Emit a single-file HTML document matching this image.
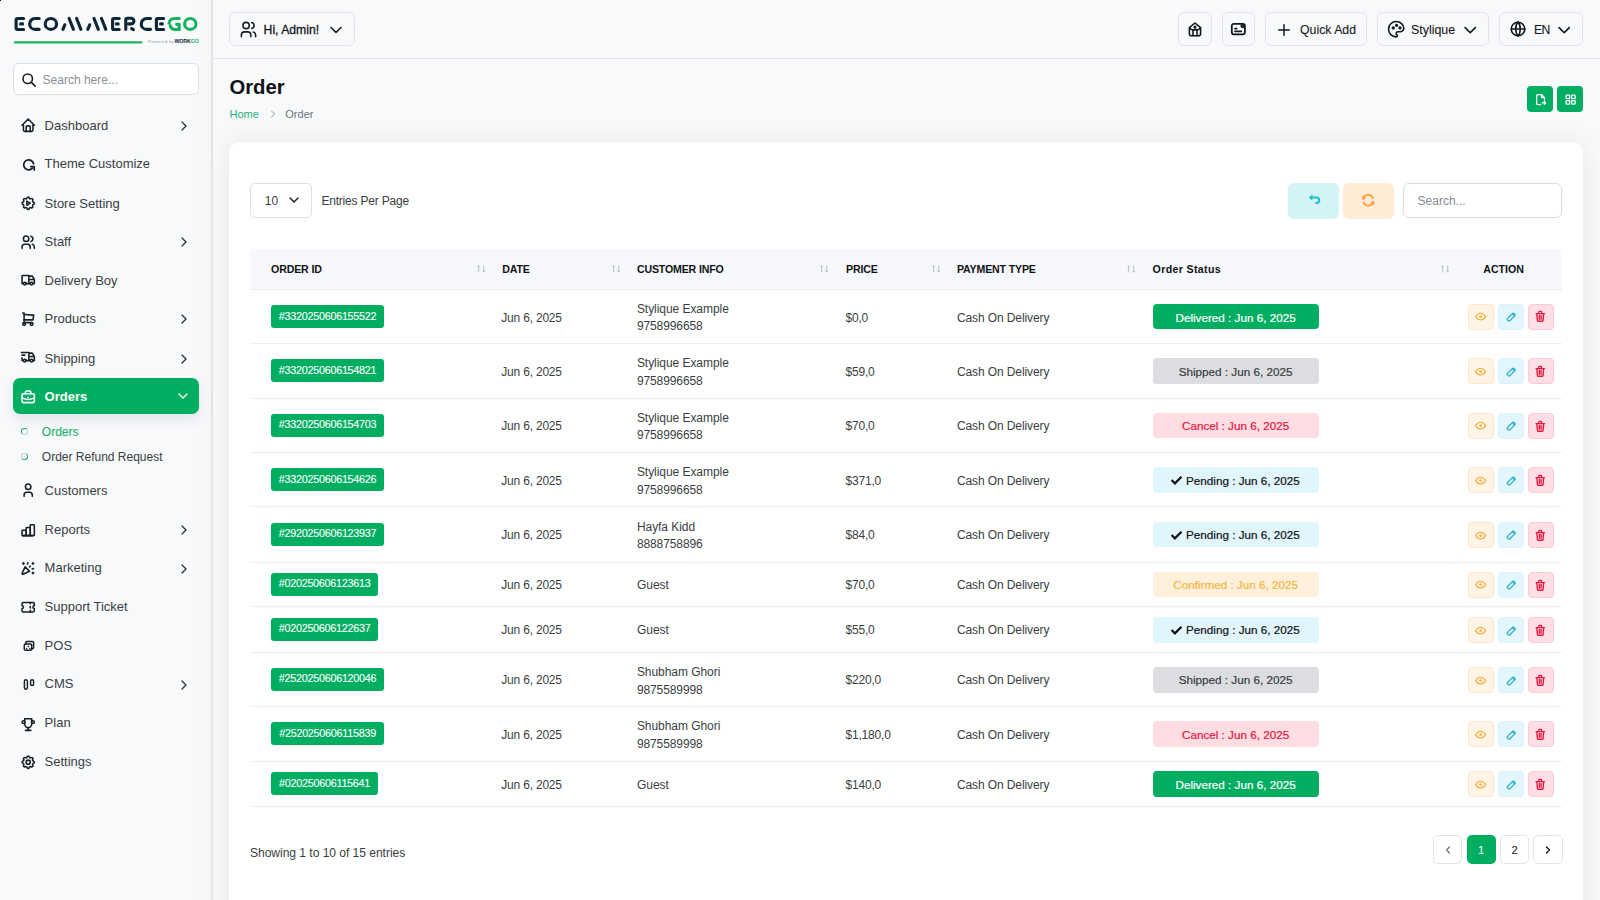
<!DOCTYPE html>
<html><head><meta charset="utf-8"><title>Order</title><style>
*{margin:0;padding:0}
html,body{width:1600px;height:900px;overflow:hidden;background:#f8f9fb;font-family:"Liberation Sans",sans-serif;position:relative}
.t{position:absolute;white-space:nowrap}
.b{position:absolute}
.ic{position:absolute;line-height:0}
.ic svg, svg.ic{display:block;overflow:visible}
#side{position:absolute;left:0;top:0;width:211px;height:900px;background:#f8f9fb;border-right:2px solid #e4e5e7;box-shadow:inset -24px 0 24px -24px rgba(0,0,0,0.03)}
#hdr{position:absolute;left:213px;top:58px;width:1387px;height:1px;background:#e3e5e8}
#card{position:absolute;left:229.2px;top:142.2px;width:1353.9px;height:800px;background:#fff;border-radius:10px;box-shadow:0 0 26px rgba(0,0,0,0.075)}
.sort{font-size:9px;line-height:12px;color:#b9bec5;letter-spacing:-1px}
</style></head>
<body>
<div id="side"></div>
<div class="b" style="left:0px;top:0px;width:1px;height:1px;background:#1a1a1a"></div>
<svg class="ic" style="left:0;top:0" width="212" height="50" viewBox="0 0 212 50" fill="none" stroke-linecap="round" stroke-linejoin="round"><path d="M23.6 18.45H17.4a1.3 1.3 0 0 0 -1.3 1.3V28.2a1.3 1.3 0 0 0 1.3 1.3H23.6" stroke="#0e2535" stroke-width="3.1"/><path d="M20.6 23.9H22.6" stroke="#0e2535" stroke-width="3.1"/><path d="M39.2 18.45H35.1a5.45 5.45 0 0 0 0 10.9H39.2" stroke="#0e2535" stroke-width="3.1"/><ellipse cx="50.9" cy="23.9" rx="5.7" ry="5.45" stroke="#0e2535" stroke-width="3.1"/><path d="M62.9 29.35L64.8 24.8" stroke="#0e2535" stroke-width="3.1"/><path d="M69.1 18.45L73.4 29.35" stroke="#0e2535" stroke-width="3.1"/><path d="M76.6 18.45L80.9 29.35" stroke="#0e2535" stroke-width="3.1"/><path d="M87.8 29.35L89.7 24.8" stroke="#0e2535" stroke-width="3.1"/><path d="M94.0 18.45L98.3 29.35" stroke="#0e2535" stroke-width="3.1"/><path d="M101.5 18.45L105.8 29.35" stroke="#0e2535" stroke-width="3.1"/><path d="M119.2 18.45H113.9a1.3 1.3 0 0 0 -1.3 1.3V28.2a1.3 1.3 0 0 0 1.3 1.3H119.2" stroke="#0e2535" stroke-width="3.1"/><path d="M116.4 23.9H118.2" stroke="#0e2535" stroke-width="3.1"/><path d="M125.8 29.35V19.6a1.3 1.3 0 0 1 1.3 -1.3H131.1a2.8 2.8 0 0 1 0 5.6H128.8" stroke="#0e2535" stroke-width="3.1"/><path d="M131.6 28.6L133.4 29.6" stroke="#0e2535" stroke-width="3.1"/><path d="M150.5 18.45H146.7a5.45 5.45 0 0 0 0 10.9H150.5" stroke="#0e2535" stroke-width="3.1"/><path d="M163.6 18.45H157.7a1.3 1.3 0 0 0 -1.3 1.3V28.2a1.3 1.3 0 0 0 1.3 1.3H163.6" stroke="#0e2535" stroke-width="3.1"/><path d="M160.6 23.9H162.4" stroke="#0e2535" stroke-width="3.1"/><path d="M179.2 18.45H174.6a5.45 5.45 0 0 0 -5.5 4.6" stroke="#12b35d" stroke-width="3.1"/><path d="M170.2 25.6a5.45 5.45 0 0 0 4.4 3.9H179.2V24.2H176.6" stroke="#12b35d" stroke-width="3.1"/><ellipse cx="190.3" cy="23.9" rx="5.7" ry="5.45" stroke="#12b35d" stroke-width="3.1"/><path d="M15 42.4H141.4" stroke="#1ab35f" stroke-width="2.1"/></svg>
<div class="t" style="left:148px;top:38.6px;font-size:4.4px;line-height:6px;color:#9aa0a6;letter-spacing:0.3px">Powered by</div>
<div class="t" style="left:174.4px;top:38px;font-size:5.2px;line-height:7px;font-weight:700;color:#0e2535;letter-spacing:0px">WORK<span style="color:#1ab35f">GO</span></div>
<div class="b" style="left:12.5px;top:62.5px;width:186.3px;height:32.3px;background:#fff;border:1px solid #dcdfe4;border-radius:6px;box-sizing:border-box"></div>
<div class="ic" style="left:20.60px;top:71.60px;width:16.2px;height:16.2px"><svg width="16.2" height="16.2" viewBox="0 0 24 24" fill="none" stroke="#1c1f23" stroke-width="2.4" stroke-linecap="round" stroke-linejoin="round"><path d="M10 10m-7 0a7 7 0 1 0 14 0a7 7 0 1 0 -14 0"/><path d="M21 21l-6 -6"/></svg></div>
<div class="t" style="left:42.6px;top:72px;font-size:12px;line-height:17px;color:#8a8f96;font-weight:400;">Search here...</div>
<div class="ic" style="left:20.30px;top:117.40px;width:16.4px;height:16.4px"><svg width="16.4" height="16.4" viewBox="0 0 24 24" fill="none" stroke="#1c1f23" stroke-width="2.3" stroke-linecap="round" stroke-linejoin="round"><path d="M5 12l-2 0l9 -9l9 9l-2 0"/><path d="M5 12v7a2 2 0 0 0 2 2h10a2 2 0 0 0 2 -2v-7"/><path d="M9 21v-6a2 2 0 0 1 2 -2h2a2 2 0 0 1 2 2v6"/></svg></div>
<div class="t" style="left:44.6px;top:117px;font-size:13px;line-height:18px;color:#3a3e43;font-weight:400;">Dashboard</div>
<div class="ic" style="left:176.00px;top:118.30px;width:16px;height:16px"><svg width="16" height="16" viewBox="0 0 24 24" fill="none" stroke="#2a2e33" stroke-width="1.9" stroke-linecap="round" stroke-linejoin="round"><path d="M9 6l6 6l-6 6"/></svg></div>
<div class="ic" style="left:20.50px;top:156.90px;width:16px;height:16px"><svg width="16" height="16" viewBox="0 0 16 16" fill="none" stroke="#1c1f23" stroke-width="1.75" stroke-linecap="round" stroke-linejoin="round"><path d="M12.6 6.8A5 5 0 1 0 11.4 11.2"/><path d="M9.8 9.5H13.2V12.9"/></svg></div>
<div class="t" style="left:44.6px;top:155px;font-size:13px;line-height:18px;color:#3a3e43;font-weight:400;">Theme Customize</div>
<div class="ic" style="left:20.30px;top:195.00px;width:16.4px;height:16.4px"><svg width="16.4" height="16.4" viewBox="0 0 24 24" fill="none" stroke="#1c1f23" stroke-width="2.3" stroke-linecap="round" stroke-linejoin="round"><path d="M10.325 4.317c.426 -1.756 2.924 -1.756 3.35 0a1.724 1.724 0 0 0 2.573 1.066c1.543 -.94 3.31 .826 2.37 2.37a1.724 1.724 0 0 0 1.065 2.572c1.756 .426 1.756 2.924 0 3.35a1.724 1.724 0 0 0 -1.066 2.573c.94 1.543 -.826 3.31 -2.37 2.37a1.724 1.724 0 0 0 -2.572 1.065c-.426 1.756 -2.924 1.756 -3.35 0a1.724 1.724 0 0 0 -2.573 -1.066c-1.543 .94 -3.31 -.826 -2.37 -2.37a1.724 1.724 0 0 0 -1.065 -2.572c-1.756 -.426 -1.756 -2.924 0 -3.35a1.724 1.724 0 0 0 1.066 -2.573c-.94 -1.543 .826 -3.31 2.37 -2.37c1 .608 2.296 .07 2.572 -1.065z"/><path d="M10 9v6l5 -3z"/></svg></div>
<div class="t" style="left:44.6px;top:195px;font-size:13px;line-height:18px;color:#3a3e43;font-weight:400;">Store Setting</div>
<div class="ic" style="left:20.30px;top:234.20px;width:16.4px;height:16.4px"><svg width="16.4" height="16.4" viewBox="0 0 24 24" fill="none" stroke="#1c1f23" stroke-width="2.3" stroke-linecap="round" stroke-linejoin="round"><path d="M9 7m-4 0a4 4 0 1 0 8 0a4 4 0 1 0 -8 0"/><path d="M3 21v-2a4 4 0 0 1 4 -4h4a4 4 0 0 1 4 4v2"/><path d="M16 3.13a4 4 0 0 1 0 7.75"/><path d="M21 21v-2a4 4 0 0 0 -3 -3.85"/></svg></div>
<div class="t" style="left:44.6px;top:233px;font-size:13px;line-height:18px;color:#3a3e43;font-weight:400;">Staff</div>
<div class="ic" style="left:176.00px;top:234.30px;width:16px;height:16px"><svg width="16" height="16" viewBox="0 0 24 24" fill="none" stroke="#2a2e33" stroke-width="1.9" stroke-linecap="round" stroke-linejoin="round"><path d="M9 6l6 6l-6 6"/></svg></div>
<div class="ic" style="left:20.30px;top:272.30px;width:16.4px;height:16.4px"><svg width="16.4" height="16.4" viewBox="0 0 24 24" fill="none" stroke="#1c1f23" stroke-width="2.3" stroke-linecap="round" stroke-linejoin="round"><path d="M7 17m-2 0a2 2 0 1 0 4 0a2 2 0 1 0 -4 0"/><path d="M17 17m-2 0a2 2 0 1 0 4 0a2 2 0 1 0 -4 0"/><path d="M5 17h-2v-11a1 1 0 0 1 1 -1h9v12m-4 0h6m4 0h2v-6h-8m0 -5h5l3 5"/></svg></div>
<div class="t" style="left:44.6px;top:272px;font-size:13px;line-height:18px;color:#3a3e43;font-weight:400;">Delivery Boy</div>
<div class="ic" style="left:20.30px;top:311.20px;width:16.4px;height:16.4px"><svg width="16.4" height="16.4" viewBox="0 0 24 24" fill="none" stroke="#1c1f23" stroke-width="2.3" stroke-linecap="round" stroke-linejoin="round"><path d="M6 19m-2 0a2 2 0 1 0 4 0a2 2 0 1 0 -4 0"/><path d="M17 19m-2 0a2 2 0 1 0 4 0a2 2 0 1 0 -4 0"/><path d="M17 17h-11v-14h-2"/><path d="M6 5l14 1l-1 7h-13"/></svg></div>
<div class="t" style="left:44.6px;top:310px;font-size:13px;line-height:18px;color:#3a3e43;font-weight:400;">Products</div>
<div class="ic" style="left:176.00px;top:311.30px;width:16px;height:16px"><svg width="16" height="16" viewBox="0 0 24 24" fill="none" stroke="#2a2e33" stroke-width="1.9" stroke-linecap="round" stroke-linejoin="round"><path d="M9 6l6 6l-6 6"/></svg></div>
<div class="ic" style="left:20.30px;top:349.30px;width:16.4px;height:16.4px"><svg width="16.4" height="16.4" viewBox="0 0 24 24" fill="none" stroke="#1c1f23" stroke-width="2.3" stroke-linecap="round" stroke-linejoin="round"><path d="M7 17m-2 0a2 2 0 1 0 4 0a2 2 0 1 0 -4 0"/><path d="M17 17m-2 0a2 2 0 1 0 4 0a2 2 0 1 0 -4 0"/><path d="M5 17h-2v-4m-1 -8h11v12m-4 0h6m4 0h2v-6h-8m0 -5h5l3 5"/><path d="M3 9l4 0"/></svg></div>
<div class="t" style="left:44.6px;top:350px;font-size:13px;line-height:18px;color:#3a3e43;font-weight:400;">Shipping</div>
<div class="ic" style="left:176.00px;top:351.30px;width:16px;height:16px"><svg width="16" height="16" viewBox="0 0 24 24" fill="none" stroke="#2a2e33" stroke-width="1.9" stroke-linecap="round" stroke-linejoin="round"><path d="M9 6l6 6l-6 6"/></svg></div>
<div class="ic" style="left:20.30px;top:482.40px;width:16.4px;height:16.4px"><svg width="16.4" height="16.4" viewBox="0 0 24 24" fill="none" stroke="#1c1f23" stroke-width="2.3" stroke-linecap="round" stroke-linejoin="round"><path d="M8 7a4 4 0 1 0 8 0a4 4 0 0 0 -8 0"/><path d="M6 21v-2a4 4 0 0 1 4 -4h4a4 4 0 0 1 4 4v2"/></svg></div>
<div class="t" style="left:44.6px;top:482px;font-size:13px;line-height:18px;color:#3a3e43;font-weight:400;">Customers</div>
<div class="ic" style="left:20.30px;top:521.50px;width:16.4px;height:16.4px"><svg width="16.4" height="16.4" viewBox="0 0 24 24" fill="none" stroke="#1c1f23" stroke-width="2.3" stroke-linecap="round" stroke-linejoin="round"><path d="M3 12m0 1a1 1 0 0 1 1 -1h4a1 1 0 0 1 1 1v6a1 1 0 0 1 -1 1h-4a1 1 0 0 1 -1 -1z"/><path d="M9 8m0 1a1 1 0 0 1 1 -1h4a1 1 0 0 1 1 1v10a1 1 0 0 1 -1 1h-4a1 1 0 0 1 -1 -1z"/><path d="M15 4m0 1a1 1 0 0 1 1 -1h4a1 1 0 0 1 1 1v14a1 1 0 0 1 -1 1h-4a1 1 0 0 1 -1 -1z"/><path d="M4 20l14 0"/></svg></div>
<div class="t" style="left:44.6px;top:521px;font-size:13px;line-height:18px;color:#3a3e43;font-weight:400;">Reports</div>
<div class="ic" style="left:176.00px;top:522.30px;width:16px;height:16px"><svg width="16" height="16" viewBox="0 0 24 24" fill="none" stroke="#2a2e33" stroke-width="1.9" stroke-linecap="round" stroke-linejoin="round"><path d="M9 6l6 6l-6 6"/></svg></div>
<div class="ic" style="left:20.30px;top:560.20px;width:16.4px;height:16.4px"><svg width="16.4" height="16.4" viewBox="0 0 24 24" fill="none" stroke="#1c1f23" stroke-width="2.3" stroke-linecap="round" stroke-linejoin="round"><path d="M4 5h2"/><path d="M5 4v2"/><path d="M11.5 4l-.5 2"/><path d="M18 5h2"/><path d="M19 4v2"/><path d="M15 9l-1 1"/><path d="M18 13l2 -.5"/><path d="M18 19h2"/><path d="M19 18v2"/><path d="M14 16.518l-6.518 -6.518l-4.39 9.58a1 1 0 0 0 1.329 1.329l9.579 -4.39z"/></svg></div>
<div class="t" style="left:44.6px;top:559px;font-size:13px;line-height:18px;color:#3a3e43;font-weight:400;">Marketing</div>
<div class="ic" style="left:176.00px;top:560.80px;width:16px;height:16px"><svg width="16" height="16" viewBox="0 0 24 24" fill="none" stroke="#2a2e33" stroke-width="1.9" stroke-linecap="round" stroke-linejoin="round"><path d="M9 6l6 6l-6 6"/></svg></div>
<div class="ic" style="left:20.30px;top:599.00px;width:16.4px;height:16.4px"><svg width="16.4" height="16.4" viewBox="0 0 24 24" fill="none" stroke="#1c1f23" stroke-width="2.3" stroke-linecap="round" stroke-linejoin="round"><path d="M15 5l0 2"/><path d="M15 11l0 2"/><path d="M15 17l0 2"/><path d="M5 5h14a2 2 0 0 1 2 2v3a2 2 0 0 0 0 4v3a2 2 0 0 1 -2 2h-14a2 2 0 0 1 -2 -2v-3a2 2 0 0 0 0 -4v-3a2 2 0 0 1 2 -2"/></svg></div>
<div class="t" style="left:44.6px;top:598px;font-size:13px;line-height:18px;color:#3a3e43;font-weight:400;">Support Ticket</div>
<div class="ic" style="left:20.50px;top:637.50px;width:16px;height:16px"><svg width="16" height="16" viewBox="0 0 16 16" fill="none" stroke="#1c1f23" stroke-width="1.5" stroke-linecap="round" stroke-linejoin="round"><path d="M4.8 6.1V4.6a1.2 1.2 0 0 1 1.2 -1.2H11.4a1.2 1.2 0 0 1 1.2 1.2V9.5a1.2 1.2 0 0 1 -1.2 1.2H10.7"/><path d="M3.3 7.3a1.2 1.2 0 0 1 1.2 -1.2H9.5a1.2 1.2 0 0 1 1.2 1.2V11.1a1.2 1.2 0 0 1 -1.2 1.2H4.5a1.2 1.2 0 0 1 -1.2 -1.2Z"/><path d="M5.6 10.4h.01"/><path d="M7.4 8.6h.01"/><path d="M8.9 10.4h.01"/></svg></div>
<div class="t" style="left:44.6px;top:637px;font-size:13px;line-height:18px;color:#3a3e43;font-weight:400;">POS</div>
<div class="ic" style="left:20.50px;top:677.10px;width:16px;height:16px"><svg width="16" height="16" viewBox="0 0 16 16" fill="none" stroke="#1c1f23" stroke-width="1.45" stroke-linecap="round" stroke-linejoin="round"><path d="M3.4 4.3a1.5 1.5 0 0 1 3 0V10.8a1.5 1.5 0 0 1 -3 0Z"/><path d="M9.6 4.3a1.5 1.5 0 0 1 3 0V6.9a1.5 1.5 0 0 1 -3 0Z"/></svg></div>
<div class="t" style="left:44.6px;top:675px;font-size:13px;line-height:18px;color:#3a3e43;font-weight:400;">CMS</div>
<div class="ic" style="left:176.00px;top:676.80px;width:16px;height:16px"><svg width="16" height="16" viewBox="0 0 24 24" fill="none" stroke="#2a2e33" stroke-width="1.9" stroke-linecap="round" stroke-linejoin="round"><path d="M9 6l6 6l-6 6"/></svg></div>
<div class="ic" style="left:20.30px;top:715.80px;width:16.4px;height:16.4px"><svg width="16.4" height="16.4" viewBox="0 0 24 24" fill="none" stroke="#1c1f23" stroke-width="2.3" stroke-linecap="round" stroke-linejoin="round"><path d="M8 21l8 0"/><path d="M12 17l0 4"/><path d="M7 4l10 0"/><path d="M17 4v8a5 5 0 0 1 -10 0v-8"/><path d="M5 9m-2 0a2 2 0 1 0 4 0a2 2 0 1 0 -4 0"/><path d="M19 9m-2 0a2 2 0 1 0 4 0a2 2 0 1 0 -4 0"/></svg></div>
<div class="t" style="left:44.6px;top:714px;font-size:13px;line-height:18px;color:#3a3e43;font-weight:400;">Plan</div>
<div class="ic" style="left:20.30px;top:754.30px;width:16.4px;height:16.4px"><svg width="16.4" height="16.4" viewBox="0 0 24 24" fill="none" stroke="#1c1f23" stroke-width="2.3" stroke-linecap="round" stroke-linejoin="round"><path d="M10.325 4.317c.426 -1.756 2.924 -1.756 3.35 0a1.724 1.724 0 0 0 2.573 1.066c1.543 -.94 3.31 .826 2.37 2.37a1.724 1.724 0 0 0 1.065 2.572c1.756 .426 1.756 2.924 0 3.35a1.724 1.724 0 0 0 -1.066 2.573c.94 1.543 -.826 3.31 -2.37 2.37a1.724 1.724 0 0 0 -2.572 1.065c-.426 1.756 -2.924 1.756 -3.35 0a1.724 1.724 0 0 0 -2.573 -1.066c-1.543 .94 -3.31 -.826 -2.37 -2.37a1.724 1.724 0 0 0 -1.065 -2.572c-1.756 -.426 -1.756 -2.924 0 -3.35a1.724 1.724 0 0 0 1.066 -2.573c-.94 -1.543 .826 -3.31 2.37 -2.37c1 .608 2.296 .07 2.572 -1.065z"/><path d="M9 12a3 3 0 1 0 6 0a3 3 0 0 0 -6 0"/></svg></div>
<div class="t" style="left:44.6px;top:753px;font-size:13px;line-height:18px;color:#3a3e43;font-weight:400;">Settings</div>
<div class="b" style="left:12.7px;top:378.3px;width:186.3px;height:35.5px;background:#00ae62;border-radius:7px;box-shadow:0 6px 12px rgba(40,60,80,0.10)"></div>
<div class="ic" style="left:20.30px;top:388.80px;width:16.4px;height:16.4px"><svg width="16.4" height="16.4" viewBox="0 0 24 24" fill="none" stroke="#fff" stroke-width="2.3" stroke-linecap="round" stroke-linejoin="round"><path d="M3 7m0 2a2 2 0 0 1 2 -2h14a2 2 0 0 1 2 2v9a2 2 0 0 1 -2 2h-14a2 2 0 0 1 -2 -2z"/><path d="M8 7v-2a2 2 0 0 1 2 -2h4a2 2 0 0 1 2 2v2"/><path d="M12 12l0 .01"/><path d="M3 13a20 20 0 0 0 18 0"/></svg></div>
<div class="t" style="left:44.6px;top:388px;font-size:13px;line-height:18px;color:#fff;font-weight:700;">Orders</div>
<div class="ic" style="left:175.10px;top:388.20px;width:16px;height:16px"><svg width="16" height="16" viewBox="0 0 24 24" fill="none" stroke="#fff" stroke-width="1.9" stroke-linecap="round" stroke-linejoin="round"><path d="M6 9l6 6l6 -6"/></svg></div>
<div class="b" style="left:21.2px;top:428.4px;width:6.6px;height:6.6px;border-radius:50%;box-sizing:border-box;border:1.7px solid #c8cdd5;border-left-color:#19b46b;border-top-color:#19b46b"></div>
<div class="t" style="left:41.8px;top:424px;font-size:12px;line-height:17px;color:#1fb26d;font-weight:400;-webkit-text-stroke:0.15px currentColor">Orders</div>
<div class="b" style="left:21.2px;top:453.4px;width:6.6px;height:6.6px;border-radius:50%;box-sizing:border-box;border:1.7px solid #c8cdd5;border-right-color:#19b46b;border-bottom-color:#19b46b"></div>
<div class="t" style="left:41.8px;top:449px;font-size:12px;line-height:17px;color:#3a3e43;font-weight:400;">Order Refund Request</div>
<div id="hdr"></div>
<div class="b" style="left:229.3px;top:12.3px;width:125.5px;height:33.4px;border:1px solid #e2e4e7;border-radius:6px;box-sizing:border-box"></div>
<div class="ic" style="left:238.90px;top:20.20px;width:19px;height:19px"><svg width="19" height="19" viewBox="0 0 24 24" fill="none" stroke="#1a1d20" stroke-width="1.95" stroke-linecap="round" stroke-linejoin="round"><path d="M9 7m-4 0a4 4 0 1 0 8 0a4 4 0 1 0 -8 0"/><path d="M3 21v-2a4 4 0 0 1 4 -4h4a4 4 0 0 1 4 4v2"/><path d="M16 3.13a4 4 0 0 1 0 7.75"/><path d="M21 21v-2a4 4 0 0 0 -3 -3.85"/></svg></div>
<div class="t" style="left:263.6px;top:22px;font-size:12.2px;line-height:17px;color:#15181b;font-weight:400;-webkit-text-stroke:0.3px currentColor">Hi, Admin!</div>
<div class="ic" style="left:325.60px;top:19.90px;width:20px;height:20px"><svg width="20" height="20" viewBox="0 0 24 24" fill="none" stroke="#15181b" stroke-width="1.9" stroke-linecap="round" stroke-linejoin="round"><path d="M6 9l6 6l6 -6"/></svg></div>
<div class="b" style="left:1178px;top:12.3px;width:34px;height:33.4px;border:1px solid #e2e4e7;border-radius:6px;box-sizing:border-box"></div>
<div class="ic" style="left:1187.00px;top:21.00px;width:16px;height:16px"><svg width="16" height="16" viewBox="0 0 16 16" fill="none" stroke="#15181b" stroke-width="1.6" stroke-linecap="round" stroke-linejoin="round"><path d="M2.4 6.6L8 2.0L13.6 6.6V12.8a2 2 0 0 1 -2 2H4.4a2 2 0 0 1 -2 -2Z"/><path d="M2.8 6.9Q4 8.9 5.6 8.9H10.4Q12 8.9 13.2 6.9"/><path d="M6 9V14.6"/><path d="M10 9V14.6"/><path d="M8 7.2V5.6"/><path d="M7.1 6.3L8 5.4L8.9 6.3"/></svg></div>
<div class="b" style="left:1222px;top:12.3px;width:33px;height:33.4px;border:1px solid #e2e4e7;border-radius:6px;box-sizing:border-box"></div>
<div class="ic" style="left:1230.00px;top:21.00px;width:16px;height:16px"><svg width="16" height="16" viewBox="0 0 16 16" fill="none" stroke="#15181b" stroke-width="1.75" stroke-linecap="round" stroke-linejoin="round"><path d="M1.8 4.9a2 2 0 0 1 2 -2H12.9a2 2 0 0 1 2 2V11.3a2 2 0 0 1 -2 2H3.8a2 2 0 0 1 -2 -2Z"/><path d="M5 7.5H6.6"/><path d="M5 10.3H11.4"/><path d="M12.6 5m-1.3 0a1.3 1.3 0 1 0 2.6 0a1.3 1.3 0 1 0 -2.6 0"/></svg></div>
<div class="b" style="left:1265.3px;top:12.3px;width:101.7px;height:33.4px;border:1px solid #e2e4e7;border-radius:6px;box-sizing:border-box"></div>
<div class="ic" style="left:1275.20px;top:20.90px;width:18px;height:18px"><svg width="18" height="18" viewBox="0 0 24 24" fill="none" stroke="#15181b" stroke-width="2.0" stroke-linecap="round" stroke-linejoin="round"><path d="M12 5l0 14"/><path d="M5 12l14 0"/></svg></div>
<div class="t" style="left:1300px;top:22px;font-size:12.3px;line-height:17px;color:#15181b;font-weight:400;-webkit-text-stroke:0.1px currentColor">Quick Add</div>
<div class="b" style="left:1377px;top:12.3px;width:112px;height:33.4px;border:1px solid #e2e4e7;border-radius:6px;box-sizing:border-box"></div>
<div class="ic" style="left:1385.60px;top:18.90px;width:20.4px;height:20.4px"><svg width="20.4" height="20.4" viewBox="0 0 24 24" fill="none" stroke="#15181b" stroke-width="1.9" stroke-linecap="round" stroke-linejoin="round"><path d="M12 21a9 9 0 0 1 0 -18c4.97 0 9 3.582 9 8c0 1.06 -.474 2.078 -1.318 2.828c-.844 .75 -1.989 1.172 -3.182 1.172h-2.5a2 2 0 0 0 -1 3.75a1.3 1.3 0 0 1 -1 2.25"/><path d="M8.5 10.5m-1 0a1 1 0 1 0 2 0a1 1 0 1 0 -2 0"/><path d="M12.5 7.5m-1 0a1 1 0 1 0 2 0a1 1 0 1 0 -2 0"/><path d="M16.5 10.5m-1 0a1 1 0 1 0 2 0a1 1 0 1 0 -2 0"/></svg></div>
<div class="t" style="left:1411px;top:22px;font-size:12.4px;line-height:17px;color:#15181b;font-weight:400;-webkit-text-stroke:0.1px currentColor">Stylique</div>
<div class="ic" style="left:1459.90px;top:19.60px;width:20.4px;height:20.4px"><svg width="20.4" height="20.4" viewBox="0 0 24 24" fill="none" stroke="#15181b" stroke-width="1.9" stroke-linecap="round" stroke-linejoin="round"><path d="M6 9l6 6l6 -6"/></svg></div>
<div class="b" style="left:1499.3px;top:12.3px;width:83.7px;height:33.4px;border:1px solid #e2e4e7;border-radius:6px;box-sizing:border-box"></div>
<div class="ic" style="left:1510.40px;top:21.10px;width:16px;height:16px"><svg width="16" height="16" viewBox="0 0 16 16" fill="none" stroke="#15181b" stroke-width="1.6" stroke-linecap="round" stroke-linejoin="round"><path d="M8 8m-6.8 0a6.8 6.8 0 1 0 13.6 0a6.8 6.8 0 1 0 -13.6 0"/><path d="M1.4 8H14.6"/><path d="M8 1.2C5 4 5 12 8 14.8"/><path d="M8 1.2C11 4 11 12 8 14.8"/></svg></div>
<div class="t" style="left:1534px;top:22px;font-size:12.2px;line-height:17px;color:#15181b;font-weight:400;letter-spacing:-0.6px;-webkit-text-stroke:0.1px currentColor">EN</div>
<div class="ic" style="left:1553.90px;top:19.60px;width:20.4px;height:20.4px"><svg width="20.4" height="20.4" viewBox="0 0 24 24" fill="none" stroke="#15181b" stroke-width="1.9" stroke-linecap="round" stroke-linejoin="round"><path d="M6 9l6 6l6 -6"/></svg></div>
<div class="t" style="left:229.4px;top:73px;font-size:20.3px;line-height:28px;color:#0f1215;font-weight:700;">Order</div>
<div class="t" style="left:229.5px;top:107px;font-size:11px;line-height:15px;color:#25b37a;font-weight:400;">Home</div>
<div class="ic" style="left:266.50px;top:108.20px;width:12px;height:12px"><svg width="12" height="12" viewBox="0 0 24 24" fill="none" stroke="#80868d" stroke-width="1.7" stroke-linecap="round" stroke-linejoin="round"><path d="M9 6l6 6l-6 6"/></svg></div>
<div class="t" style="left:285.3px;top:107px;font-size:11px;line-height:15px;color:#6c737a;font-weight:400;">Order</div>
<div class="b" style="left:1527px;top:86px;width:26px;height:26px;background:#00ae62;border-radius:4px"></div>
<div class="ic" style="left:1533.50px;top:92.60px;width:13.2px;height:13.2px"><svg width="13.2" height="13.2" viewBox="0 0 16 16" fill="none" stroke="#fff" stroke-width="1.6" stroke-linecap="round" stroke-linejoin="round"><path d="M9.2 2H4.6a1.4 1.4 0 0 0 -1.4 1.4V12.6a1.4 1.4 0 0 0 1.4 1.4H8"/><path d="M9.2 2L12.8 5.6V8.6"/><path d="M9.2 2V5.6H12.8"/><path d="M10 12H14"/><path d="M12.4 10.4L14 12L12.4 13.6"/></svg></div>
<div class="b" style="left:1557px;top:86px;width:26px;height:26px;background:#00ae62;border-radius:4px"></div>
<div class="ic" style="left:1563.60px;top:92.60px;width:13px;height:13px"><svg width="13" height="13" viewBox="0 0 16 16" fill="none" stroke="#fff" stroke-width="1.6" stroke-linecap="round" stroke-linejoin="round"><path d="M2.6 3.6a1 1 0 0 1 1 -1h2.4a1 1 0 0 1 1 1v2.4a1 1 0 0 1 -1 1h-2.4a1 1 0 0 1 -1 -1Z"/><path d="M9.4 3.6a1 1 0 0 1 1 -1h2.4a1 1 0 0 1 1 1v2.4a1 1 0 0 1 -1 1h-2.4a1 1 0 0 1 -1 -1Z"/><path d="M2.6 10.4a1 1 0 0 1 1 -1h2.4a1 1 0 0 1 1 1v2.4a1 1 0 0 1 -1 1h-2.4a1 1 0 0 1 -1 -1Z"/><path d="M9.4 10.4a1 1 0 0 1 1 -1h2.4a1 1 0 0 1 1 1v2.4a1 1 0 0 1 -1 1h-2.4a1 1 0 0 1 -1 -1Z"/></svg></div>
<div id="card"></div>
<div class="b" style="left:250.3px;top:183.3px;width:62px;height:34.7px;border:1px solid #dde1e6;border-radius:5px;box-sizing:border-box;background:#fff"></div>
<div class="t" style="left:264.8px;top:193px;font-size:12px;line-height:17px;color:#3a3e43;font-weight:400;">10</div>
<div class="ic" style="left:286.20px;top:192.30px;width:16px;height:16px"><svg width="16" height="16" viewBox="0 0 24 24" fill="none" stroke="#1c1f23" stroke-width="2.2" stroke-linecap="round" stroke-linejoin="round"><path d="M6 9l6 6l6 -6"/></svg></div>
<div class="t" style="left:321.4px;top:193px;font-size:12px;line-height:17px;color:#3a3e43;font-weight:400;letter-spacing:-0.2px">Entries Per Page</div>
<div class="b" style="left:1287.5px;top:183.1px;width:51.4px;height:35.8px;background:#d4f3f7;border-radius:6px"></div>
<div class="ic" style="left:1307.00px;top:192.00px;width:16px;height:16px"><svg width="16" height="16" viewBox="0 0 16 16" fill="none" stroke="#1dbfd3" stroke-width="1" stroke-linecap="round" stroke-linejoin="round"><path d="M1.8 5.5L5.4 2.6V4.5H9.5A3.8 3.8 0 0 1 9.5 12.1H8.4V10.1H9.5A1.8 1.8 0 0 0 9.5 6.5H5.4V8.4Z" fill="#1dbfd3" stroke="none"/></svg></div>
<div class="b" style="left:1342.9px;top:183.1px;width:51.1px;height:35.8px;background:#ffebd6;border-radius:6px"></div>
<div class="ic" style="left:1361.10px;top:193.00px;width:14.5px;height:14.5px"><svg width="14.5" height="14.5" viewBox="0 0 16 16" fill="none" stroke="#ff9c38" stroke-width="1.9" stroke-linecap="round" stroke-linejoin="round"><path d="M2.6 6.4A5.6 5.6 0 0 1 13.2 5.6"/><path d="M13.4 9.6A5.6 5.6 0 0 1 2.8 10.4"/><path d="M1.2 2.6L5.6 5.2L1.8 7.6Z" fill="#ff9c38" stroke="none"/><path d="M14.8 13.4L10.4 10.8L14.2 8.4Z" fill="#ff9c38" stroke="none"/></svg></div>
<div class="b" style="left:1403.1px;top:183.1px;width:159.4px;height:35px;border:1px solid #d9dee5;border-radius:6px;box-sizing:border-box;background:#fff"></div>
<div class="t" style="left:1417.6px;top:193px;font-size:12px;line-height:17px;color:#868b92;font-weight:400;">Search...</div>
<div class="b" style="left:250px;top:249.2px;width:1312.3px;height:40.1px;background:#f7f8fb"></div>
<div class="b" style="left:250px;top:289px;width:1312.3px;height:1px;background:#eceef1"></div>
<div class="t" style="left:271.1px;top:262px;font-size:10.6px;line-height:15px;color:#0f1215;font-weight:700;letter-spacing:-0.15px">ORDER ID</div>
<svg class="ic" style="left:477.2px;top:265px" width="9" height="8" viewBox="0 0 9 8" fill="none" stroke="#b3b8bf" stroke-width="0.9"><path d="M1.6 7.4V0.9M0.5 2.2L1.6 0.8L2.7 2.2"/><path d="M6.7 0.6V7.1M5.6 5.8L6.7 7.2L7.8 5.8"/></svg>
<div class="t" style="left:502.2px;top:262px;font-size:10.6px;line-height:15px;color:#0f1215;font-weight:700;letter-spacing:-0.15px">DATE</div>
<svg class="ic" style="left:611.6px;top:265px" width="9" height="8" viewBox="0 0 9 8" fill="none" stroke="#b3b8bf" stroke-width="0.9"><path d="M1.6 7.4V0.9M0.5 2.2L1.6 0.8L2.7 2.2"/><path d="M6.7 0.6V7.1M5.6 5.8L6.7 7.2L7.8 5.8"/></svg>
<div class="t" style="left:636.9px;top:262px;font-size:10.6px;line-height:15px;color:#0f1215;font-weight:700;letter-spacing:-0.15px">CUSTOMER INFO</div>
<svg class="ic" style="left:820px;top:265px" width="9" height="8" viewBox="0 0 9 8" fill="none" stroke="#b3b8bf" stroke-width="0.9"><path d="M1.6 7.4V0.9M0.5 2.2L1.6 0.8L2.7 2.2"/><path d="M6.7 0.6V7.1M5.6 5.8L6.7 7.2L7.8 5.8"/></svg>
<div class="t" style="left:846px;top:262px;font-size:10.6px;line-height:15px;color:#0f1215;font-weight:700;letter-spacing:-0.15px">PRICE</div>
<svg class="ic" style="left:931.9px;top:265px" width="9" height="8" viewBox="0 0 9 8" fill="none" stroke="#b3b8bf" stroke-width="0.9"><path d="M1.6 7.4V0.9M0.5 2.2L1.6 0.8L2.7 2.2"/><path d="M6.7 0.6V7.1M5.6 5.8L6.7 7.2L7.8 5.8"/></svg>
<div class="t" style="left:956.9px;top:262px;font-size:10.6px;line-height:15px;color:#0f1215;font-weight:700;letter-spacing:-0.15px">PAYMENT TYPE</div>
<svg class="ic" style="left:1127px;top:265px" width="9" height="8" viewBox="0 0 9 8" fill="none" stroke="#b3b8bf" stroke-width="0.9"><path d="M1.6 7.4V0.9M0.5 2.2L1.6 0.8L2.7 2.2"/><path d="M6.7 0.6V7.1M5.6 5.8L6.7 7.2L7.8 5.8"/></svg>
<div class="t" style="left:1152.6px;top:262px;font-size:10.6px;line-height:15px;color:#0f1215;font-weight:700;letter-spacing:0.35px">Order Status</div>
<svg class="ic" style="left:1440.8px;top:265px" width="9" height="8" viewBox="0 0 9 8" fill="none" stroke="#b3b8bf" stroke-width="0.9"><path d="M1.6 7.4V0.9M0.5 2.2L1.6 0.8L2.7 2.2"/><path d="M6.7 0.6V7.1M5.6 5.8L6.7 7.2L7.8 5.8"/></svg>
<div class="t" style="left:1483.3px;top:262px;font-size:10.6px;line-height:15px;color:#0f1215;font-weight:700;">ACTION</div>
<div class="b" style="left:250px;top:342.8px;width:1312.3px;height:1px;background:#eceef1"></div>
<div class="b" style="left:271px;top:304.95000000000005px;width:113.1px;height:23px;background:#00ae62;border-radius:3px"></div>
<div class="t" style="left:271.00px;width:113.1px;text-align:center;top:309px;font-size:10.8px;line-height:15px;color:#ffffff;font-weight:400;letter-spacing:-0.27px;-webkit-text-stroke:0.1px currentColor">#3320250606155522</div>
<div class="t" style="left:501.3px;top:310px;font-size:12px;line-height:17px;color:#3a3e43;font-weight:400;letter-spacing:-0.2px">Jun 6, 2025</div>
<div class="t" style="left:636.9px;top:301px;font-size:12px;line-height:17px;color:#3a3e43;font-weight:400;letter-spacing:-0.05px">Stylique Example</div>
<div class="t" style="left:636.9px;top:318px;font-size:12px;line-height:17px;color:#3a3e43;font-weight:400;letter-spacing:-0.1px">9758996658</div>
<div class="t" style="left:845.5px;top:310px;font-size:12px;line-height:17px;color:#3a3e43;font-weight:400;letter-spacing:-0.2px">$0,0</div>
<div class="t" style="left:956.9px;top:310px;font-size:12px;line-height:17px;color:#3a3e43;font-weight:400;letter-spacing:-0.1px">Cash On Delivery</div>
<div class="b" style="left:1152.5px;top:303.85px;width:166.2px;height:25.4px;background:#00ae62;border-radius:4px"></div>
<div class="t" style="left:1152.60px;width:166px;text-align:center;top:310px;font-size:11.7px;line-height:16px;color:#ffffff;font-weight:400;-webkit-text-stroke:0.2px currentColor">Delivered : Jun 6, 2025</div>
<div class="b" style="left:1467.6px;top:303.75000000000006px;width:26.5px;height:26.2px;background:#fff4e5;border:1px solid #fde7c8;border-radius:4px;box-sizing:border-box"></div>
<div class="ic" style="left:1473.90px;top:310.25px;width:13.2px;height:13.2px"><svg width="13.2" height="13.2" viewBox="0 0 16 16" fill="none" stroke="#f8ad38" stroke-width="1.4" stroke-linecap="round" stroke-linejoin="round"><path d="M8 8m-1 0a1 1 0 1 0 2 0a1 1 0 1 0 -2 0"/><path d="M14 8C12.4 10.8 10.4 12 8 12C5.6 12 3.6 10.8 2 8C3.6 5.2 5.6 4 8 4C10.4 4 12.4 5.2 14 8Z"/></svg></div>
<div class="b" style="left:1497.6px;top:303.75000000000006px;width:26.3px;height:26.2px;background:#e3f6fd;border:1px solid #dbf2fb;border-radius:4px;box-sizing:border-box"></div>
<div class="ic" style="left:1504.50px;top:311.15px;width:12px;height:12px"><svg width="12" height="12" viewBox="0 0 16 16" fill="none" stroke="#1aa8c6" stroke-width="1.6" stroke-linecap="round" stroke-linejoin="round"><path d="M4.6 13.2L3.2 11.8a1.2 1.2 0 0 1 0 -1.7L10.2 3.1a1.2 1.2 0 0 1 1.7 0L13.3 4.5a1.2 1.2 0 0 1 0 1.7L6.3 13.2a1.2 1.2 0 0 1 -1.7 0Z"/><path d="M10.6 4.6L11.8 5.8"/></svg></div>
<div class="b" style="left:1527.5px;top:303.75000000000006px;width:26.3px;height:26.2px;background:#ffdfe5;border:1px solid #fdcad4;border-radius:4px;box-sizing:border-box"></div>
<div class="ic" style="left:1534.35px;top:310.45px;width:12.5px;height:12.5px"><svg width="12.5" height="12.5" viewBox="0 0 16 16" fill="none" stroke="#e5173f" stroke-width="1.75" stroke-linecap="round" stroke-linejoin="round"><path d="M2.6 4.6H13.4"/><path d="M3.6 4.6L4.4 13.2a1.4 1.4 0 0 0 1.4 1.2H10.2a1.4 1.4 0 0 0 1.4 -1.2L12.4 4.6"/><path d="M6.2 4.4V2.8a1 1 0 0 1 1 -1H8.8a1 1 0 0 1 1 1V4.4"/><path d="M6.9 7V11.8"/><path d="M9.1 7V11.8"/></svg></div>
<div class="b" style="left:250px;top:397.9px;width:1312.3px;height:1px;background:#eceef1"></div>
<div class="b" style="left:271px;top:359.35px;width:113.1px;height:23px;background:#00ae62;border-radius:3px"></div>
<div class="t" style="left:271.00px;width:113.1px;text-align:center;top:363px;font-size:10.8px;line-height:15px;color:#ffffff;font-weight:400;letter-spacing:-0.27px;-webkit-text-stroke:0.1px currentColor">#3320250606154821</div>
<div class="t" style="left:501.3px;top:364px;font-size:12px;line-height:17px;color:#3a3e43;font-weight:400;letter-spacing:-0.2px">Jun 6, 2025</div>
<div class="t" style="left:636.9px;top:355px;font-size:12px;line-height:17px;color:#3a3e43;font-weight:400;letter-spacing:-0.05px">Stylique Example</div>
<div class="t" style="left:636.9px;top:373px;font-size:12px;line-height:17px;color:#3a3e43;font-weight:400;letter-spacing:-0.1px">9758996658</div>
<div class="t" style="left:845.5px;top:364px;font-size:12px;line-height:17px;color:#3a3e43;font-weight:400;letter-spacing:-0.2px">$59,0</div>
<div class="t" style="left:956.9px;top:364px;font-size:12px;line-height:17px;color:#3a3e43;font-weight:400;letter-spacing:-0.1px">Cash On Delivery</div>
<div class="b" style="left:1152.5px;top:358.25px;width:166.2px;height:25.4px;background:#dcdde0;border-radius:4px"></div>
<div class="t" style="left:1152.60px;width:166px;text-align:center;top:364px;font-size:11.7px;line-height:16px;color:#383d43;font-weight:400;-webkit-text-stroke:0.2px currentColor">Shipped : Jun 6, 2025</div>
<div class="b" style="left:1467.6px;top:358.15000000000003px;width:26.5px;height:26.2px;background:#fff4e5;border:1px solid #fde7c8;border-radius:4px;box-sizing:border-box"></div>
<div class="ic" style="left:1473.90px;top:364.65px;width:13.2px;height:13.2px"><svg width="13.2" height="13.2" viewBox="0 0 16 16" fill="none" stroke="#f8ad38" stroke-width="1.4" stroke-linecap="round" stroke-linejoin="round"><path d="M8 8m-1 0a1 1 0 1 0 2 0a1 1 0 1 0 -2 0"/><path d="M14 8C12.4 10.8 10.4 12 8 12C5.6 12 3.6 10.8 2 8C3.6 5.2 5.6 4 8 4C10.4 4 12.4 5.2 14 8Z"/></svg></div>
<div class="b" style="left:1497.6px;top:358.15000000000003px;width:26.3px;height:26.2px;background:#e3f6fd;border:1px solid #dbf2fb;border-radius:4px;box-sizing:border-box"></div>
<div class="ic" style="left:1504.50px;top:365.55px;width:12px;height:12px"><svg width="12" height="12" viewBox="0 0 16 16" fill="none" stroke="#1aa8c6" stroke-width="1.6" stroke-linecap="round" stroke-linejoin="round"><path d="M4.6 13.2L3.2 11.8a1.2 1.2 0 0 1 0 -1.7L10.2 3.1a1.2 1.2 0 0 1 1.7 0L13.3 4.5a1.2 1.2 0 0 1 0 1.7L6.3 13.2a1.2 1.2 0 0 1 -1.7 0Z"/><path d="M10.6 4.6L11.8 5.8"/></svg></div>
<div class="b" style="left:1527.5px;top:358.15000000000003px;width:26.3px;height:26.2px;background:#ffdfe5;border:1px solid #fdcad4;border-radius:4px;box-sizing:border-box"></div>
<div class="ic" style="left:1534.35px;top:364.85px;width:12.5px;height:12.5px"><svg width="12.5" height="12.5" viewBox="0 0 16 16" fill="none" stroke="#e5173f" stroke-width="1.75" stroke-linecap="round" stroke-linejoin="round"><path d="M2.6 4.6H13.4"/><path d="M3.6 4.6L4.4 13.2a1.4 1.4 0 0 0 1.4 1.2H10.2a1.4 1.4 0 0 0 1.4 -1.2L12.4 4.6"/><path d="M6.2 4.4V2.8a1 1 0 0 1 1 -1H8.8a1 1 0 0 1 1 1V4.4"/><path d="M6.9 7V11.8"/><path d="M9.1 7V11.8"/></svg></div>
<div class="b" style="left:250px;top:452.2px;width:1312.3px;height:1px;background:#eceef1"></div>
<div class="b" style="left:271px;top:414.04999999999995px;width:113.1px;height:23px;background:#00ae62;border-radius:3px"></div>
<div class="t" style="left:271.00px;width:113.1px;text-align:center;top:417px;font-size:10.8px;line-height:15px;color:#ffffff;font-weight:400;letter-spacing:-0.27px;-webkit-text-stroke:0.1px currentColor">#3320250606154703</div>
<div class="t" style="left:501.3px;top:418px;font-size:12px;line-height:17px;color:#3a3e43;font-weight:400;letter-spacing:-0.2px">Jun 6, 2025</div>
<div class="t" style="left:636.9px;top:410px;font-size:12px;line-height:17px;color:#3a3e43;font-weight:400;letter-spacing:-0.05px">Stylique Example</div>
<div class="t" style="left:636.9px;top:427px;font-size:12px;line-height:17px;color:#3a3e43;font-weight:400;letter-spacing:-0.1px">9758996658</div>
<div class="t" style="left:845.5px;top:418px;font-size:12px;line-height:17px;color:#3a3e43;font-weight:400;letter-spacing:-0.2px">$70,0</div>
<div class="t" style="left:956.9px;top:418px;font-size:12px;line-height:17px;color:#3a3e43;font-weight:400;letter-spacing:-0.1px">Cash On Delivery</div>
<div class="b" style="left:1152.5px;top:412.94999999999993px;width:166.2px;height:25.4px;background:#ffdde3;border-radius:4px"></div>
<div class="t" style="left:1152.60px;width:166px;text-align:center;top:418px;font-size:11.7px;line-height:16px;color:#e3173f;font-weight:400;-webkit-text-stroke:0.2px currentColor">Cancel : Jun 6, 2025</div>
<div class="b" style="left:1467.6px;top:412.84999999999997px;width:26.5px;height:26.2px;background:#fff4e5;border:1px solid #fde7c8;border-radius:4px;box-sizing:border-box"></div>
<div class="ic" style="left:1473.90px;top:419.35px;width:13.2px;height:13.2px"><svg width="13.2" height="13.2" viewBox="0 0 16 16" fill="none" stroke="#f8ad38" stroke-width="1.4" stroke-linecap="round" stroke-linejoin="round"><path d="M8 8m-1 0a1 1 0 1 0 2 0a1 1 0 1 0 -2 0"/><path d="M14 8C12.4 10.8 10.4 12 8 12C5.6 12 3.6 10.8 2 8C3.6 5.2 5.6 4 8 4C10.4 4 12.4 5.2 14 8Z"/></svg></div>
<div class="b" style="left:1497.6px;top:412.84999999999997px;width:26.3px;height:26.2px;background:#e3f6fd;border:1px solid #dbf2fb;border-radius:4px;box-sizing:border-box"></div>
<div class="ic" style="left:1504.50px;top:420.25px;width:12px;height:12px"><svg width="12" height="12" viewBox="0 0 16 16" fill="none" stroke="#1aa8c6" stroke-width="1.6" stroke-linecap="round" stroke-linejoin="round"><path d="M4.6 13.2L3.2 11.8a1.2 1.2 0 0 1 0 -1.7L10.2 3.1a1.2 1.2 0 0 1 1.7 0L13.3 4.5a1.2 1.2 0 0 1 0 1.7L6.3 13.2a1.2 1.2 0 0 1 -1.7 0Z"/><path d="M10.6 4.6L11.8 5.8"/></svg></div>
<div class="b" style="left:1527.5px;top:412.84999999999997px;width:26.3px;height:26.2px;background:#ffdfe5;border:1px solid #fdcad4;border-radius:4px;box-sizing:border-box"></div>
<div class="ic" style="left:1534.35px;top:419.55px;width:12.5px;height:12.5px"><svg width="12.5" height="12.5" viewBox="0 0 16 16" fill="none" stroke="#e5173f" stroke-width="1.75" stroke-linecap="round" stroke-linejoin="round"><path d="M2.6 4.6H13.4"/><path d="M3.6 4.6L4.4 13.2a1.4 1.4 0 0 0 1.4 1.2H10.2a1.4 1.4 0 0 0 1.4 -1.2L12.4 4.6"/><path d="M6.2 4.4V2.8a1 1 0 0 1 1 -1H8.8a1 1 0 0 1 1 1V4.4"/><path d="M6.9 7V11.8"/><path d="M9.1 7V11.8"/></svg></div>
<div class="b" style="left:250px;top:506.4px;width:1312.3px;height:1px;background:#eceef1"></div>
<div class="b" style="left:271px;top:468.29999999999995px;width:113.1px;height:23px;background:#00ae62;border-radius:3px"></div>
<div class="t" style="left:271.00px;width:113.1px;text-align:center;top:472px;font-size:10.8px;line-height:15px;color:#ffffff;font-weight:400;letter-spacing:-0.27px;-webkit-text-stroke:0.1px currentColor">#3320250606154626</div>
<div class="t" style="left:501.3px;top:473px;font-size:12px;line-height:17px;color:#3a3e43;font-weight:400;letter-spacing:-0.2px">Jun 6, 2025</div>
<div class="t" style="left:636.9px;top:464px;font-size:12px;line-height:17px;color:#3a3e43;font-weight:400;letter-spacing:-0.05px">Stylique Example</div>
<div class="t" style="left:636.9px;top:482px;font-size:12px;line-height:17px;color:#3a3e43;font-weight:400;letter-spacing:-0.1px">9758996658</div>
<div class="t" style="left:845.5px;top:473px;font-size:12px;line-height:17px;color:#3a3e43;font-weight:400;letter-spacing:-0.2px">$371,0</div>
<div class="t" style="left:956.9px;top:473px;font-size:12px;line-height:17px;color:#3a3e43;font-weight:400;letter-spacing:-0.1px">Cash On Delivery</div>
<div class="b" style="left:1152.5px;top:467.19999999999993px;width:166.2px;height:25.4px;background:#e1f5fc;border-radius:4px"></div>
<div class="ic" style="left:1170.15px;top:473.80px;width:13.1px;height:13.1px"><svg width="13.1" height="13.1" viewBox="0 0 16 16" fill="none" stroke="#0f1215" stroke-width="1" stroke-linecap="round" stroke-linejoin="round"><path d="M1 8.4L2.9 6.5L6 9.5L13.1 2.4L15 4.3L6 13.3Z" fill="#0f1215" stroke="none"/></svg></div>
<div class="t" style="left:1186px;top:473px;font-size:11.7px;line-height:16px;color:#0f1215;font-weight:400;-webkit-text-stroke:0.2px currentColor">Pending : Jun 6, 2025</div>
<div class="b" style="left:1467.6px;top:467.09999999999997px;width:26.5px;height:26.2px;background:#fff4e5;border:1px solid #fde7c8;border-radius:4px;box-sizing:border-box"></div>
<div class="ic" style="left:1473.90px;top:473.60px;width:13.2px;height:13.2px"><svg width="13.2" height="13.2" viewBox="0 0 16 16" fill="none" stroke="#f8ad38" stroke-width="1.4" stroke-linecap="round" stroke-linejoin="round"><path d="M8 8m-1 0a1 1 0 1 0 2 0a1 1 0 1 0 -2 0"/><path d="M14 8C12.4 10.8 10.4 12 8 12C5.6 12 3.6 10.8 2 8C3.6 5.2 5.6 4 8 4C10.4 4 12.4 5.2 14 8Z"/></svg></div>
<div class="b" style="left:1497.6px;top:467.09999999999997px;width:26.3px;height:26.2px;background:#e3f6fd;border:1px solid #dbf2fb;border-radius:4px;box-sizing:border-box"></div>
<div class="ic" style="left:1504.50px;top:474.50px;width:12px;height:12px"><svg width="12" height="12" viewBox="0 0 16 16" fill="none" stroke="#1aa8c6" stroke-width="1.6" stroke-linecap="round" stroke-linejoin="round"><path d="M4.6 13.2L3.2 11.8a1.2 1.2 0 0 1 0 -1.7L10.2 3.1a1.2 1.2 0 0 1 1.7 0L13.3 4.5a1.2 1.2 0 0 1 0 1.7L6.3 13.2a1.2 1.2 0 0 1 -1.7 0Z"/><path d="M10.6 4.6L11.8 5.8"/></svg></div>
<div class="b" style="left:1527.5px;top:467.09999999999997px;width:26.3px;height:26.2px;background:#ffdfe5;border:1px solid #fdcad4;border-radius:4px;box-sizing:border-box"></div>
<div class="ic" style="left:1534.35px;top:473.80px;width:12.5px;height:12.5px"><svg width="12.5" height="12.5" viewBox="0 0 16 16" fill="none" stroke="#e5173f" stroke-width="1.75" stroke-linecap="round" stroke-linejoin="round"><path d="M2.6 4.6H13.4"/><path d="M3.6 4.6L4.4 13.2a1.4 1.4 0 0 0 1.4 1.2H10.2a1.4 1.4 0 0 0 1.4 -1.2L12.4 4.6"/><path d="M6.2 4.4V2.8a1 1 0 0 1 1 -1H8.8a1 1 0 0 1 1 1V4.4"/><path d="M6.9 7V11.8"/><path d="M9.1 7V11.8"/></svg></div>
<div class="b" style="left:250px;top:562.0px;width:1312.3px;height:1px;background:#eceef1"></div>
<div class="b" style="left:271px;top:523.2px;width:113.1px;height:23px;background:#00ae62;border-radius:3px"></div>
<div class="t" style="left:271.00px;width:113.1px;text-align:center;top:526px;font-size:10.8px;line-height:15px;color:#ffffff;font-weight:400;letter-spacing:-0.27px;-webkit-text-stroke:0.1px currentColor">#2920250606123937</div>
<div class="t" style="left:501.3px;top:527px;font-size:12px;line-height:17px;color:#3a3e43;font-weight:400;letter-spacing:-0.2px">Jun 6, 2025</div>
<div class="t" style="left:636.9px;top:519px;font-size:12px;line-height:17px;color:#3a3e43;font-weight:400;letter-spacing:-0.05px">Hayfa Kidd</div>
<div class="t" style="left:636.9px;top:536px;font-size:12px;line-height:17px;color:#3a3e43;font-weight:400;letter-spacing:-0.1px">8888758896</div>
<div class="t" style="left:845.5px;top:527px;font-size:12px;line-height:17px;color:#3a3e43;font-weight:400;letter-spacing:-0.2px">$84,0</div>
<div class="t" style="left:956.9px;top:527px;font-size:12px;line-height:17px;color:#3a3e43;font-weight:400;letter-spacing:-0.1px">Cash On Delivery</div>
<div class="b" style="left:1152.5px;top:522.1px;width:166.2px;height:25.4px;background:#e1f5fc;border-radius:4px"></div>
<div class="ic" style="left:1170.15px;top:528.70px;width:13.1px;height:13.1px"><svg width="13.1" height="13.1" viewBox="0 0 16 16" fill="none" stroke="#0f1215" stroke-width="1" stroke-linecap="round" stroke-linejoin="round"><path d="M1 8.4L2.9 6.5L6 9.5L13.1 2.4L15 4.3L6 13.3Z" fill="#0f1215" stroke="none"/></svg></div>
<div class="t" style="left:1186px;top:527px;font-size:11.7px;line-height:16px;color:#0f1215;font-weight:400;-webkit-text-stroke:0.2px currentColor">Pending : Jun 6, 2025</div>
<div class="b" style="left:1467.6px;top:522.0px;width:26.5px;height:26.2px;background:#fff4e5;border:1px solid #fde7c8;border-radius:4px;box-sizing:border-box"></div>
<div class="ic" style="left:1473.90px;top:528.50px;width:13.2px;height:13.2px"><svg width="13.2" height="13.2" viewBox="0 0 16 16" fill="none" stroke="#f8ad38" stroke-width="1.4" stroke-linecap="round" stroke-linejoin="round"><path d="M8 8m-1 0a1 1 0 1 0 2 0a1 1 0 1 0 -2 0"/><path d="M14 8C12.4 10.8 10.4 12 8 12C5.6 12 3.6 10.8 2 8C3.6 5.2 5.6 4 8 4C10.4 4 12.4 5.2 14 8Z"/></svg></div>
<div class="b" style="left:1497.6px;top:522.0px;width:26.3px;height:26.2px;background:#e3f6fd;border:1px solid #dbf2fb;border-radius:4px;box-sizing:border-box"></div>
<div class="ic" style="left:1504.50px;top:529.40px;width:12px;height:12px"><svg width="12" height="12" viewBox="0 0 16 16" fill="none" stroke="#1aa8c6" stroke-width="1.6" stroke-linecap="round" stroke-linejoin="round"><path d="M4.6 13.2L3.2 11.8a1.2 1.2 0 0 1 0 -1.7L10.2 3.1a1.2 1.2 0 0 1 1.7 0L13.3 4.5a1.2 1.2 0 0 1 0 1.7L6.3 13.2a1.2 1.2 0 0 1 -1.7 0Z"/><path d="M10.6 4.6L11.8 5.8"/></svg></div>
<div class="b" style="left:1527.5px;top:522.0px;width:26.3px;height:26.2px;background:#ffdfe5;border:1px solid #fdcad4;border-radius:4px;box-sizing:border-box"></div>
<div class="ic" style="left:1534.35px;top:528.70px;width:12.5px;height:12.5px"><svg width="12.5" height="12.5" viewBox="0 0 16 16" fill="none" stroke="#e5173f" stroke-width="1.75" stroke-linecap="round" stroke-linejoin="round"><path d="M2.6 4.6H13.4"/><path d="M3.6 4.6L4.4 13.2a1.4 1.4 0 0 0 1.4 1.2H10.2a1.4 1.4 0 0 0 1.4 -1.2L12.4 4.6"/><path d="M6.2 4.4V2.8a1 1 0 0 1 1 -1H8.8a1 1 0 0 1 1 1V4.4"/><path d="M6.9 7V11.8"/><path d="M9.1 7V11.8"/></svg></div>
<div class="b" style="left:250px;top:606.3px;width:1312.3px;height:1px;background:#eceef1"></div>
<div class="b" style="left:271px;top:573.15px;width:107.2px;height:23px;background:#00ae62;border-radius:3px"></div>
<div class="t" style="left:271.00px;width:107.2px;text-align:center;top:576px;font-size:10.8px;line-height:15px;color:#ffffff;font-weight:400;letter-spacing:-0.27px;-webkit-text-stroke:0.1px currentColor">#020250606123613</div>
<div class="t" style="left:501.3px;top:577px;font-size:12px;line-height:17px;color:#3a3e43;font-weight:400;letter-spacing:-0.2px">Jun 6, 2025</div>
<div class="t" style="left:636.9px;top:577px;font-size:12px;line-height:17px;color:#3a3e43;font-weight:400;">Guest</div>
<div class="t" style="left:845.5px;top:577px;font-size:12px;line-height:17px;color:#3a3e43;font-weight:400;letter-spacing:-0.2px">$70,0</div>
<div class="t" style="left:956.9px;top:577px;font-size:12px;line-height:17px;color:#3a3e43;font-weight:400;letter-spacing:-0.1px">Cash On Delivery</div>
<div class="b" style="left:1152.5px;top:572.05px;width:166.2px;height:25.4px;background:#fff0db;border-radius:4px"></div>
<div class="t" style="left:1152.60px;width:166px;text-align:center;top:577px;font-size:11.7px;line-height:16px;color:#f5b545;font-weight:400;-webkit-text-stroke:0.2px currentColor">Confirmed : Jun 6, 2025</div>
<div class="b" style="left:1467.6px;top:571.9499999999999px;width:26.5px;height:26.2px;background:#fff4e5;border:1px solid #fde7c8;border-radius:4px;box-sizing:border-box"></div>
<div class="ic" style="left:1473.90px;top:578.45px;width:13.2px;height:13.2px"><svg width="13.2" height="13.2" viewBox="0 0 16 16" fill="none" stroke="#f8ad38" stroke-width="1.4" stroke-linecap="round" stroke-linejoin="round"><path d="M8 8m-1 0a1 1 0 1 0 2 0a1 1 0 1 0 -2 0"/><path d="M14 8C12.4 10.8 10.4 12 8 12C5.6 12 3.6 10.8 2 8C3.6 5.2 5.6 4 8 4C10.4 4 12.4 5.2 14 8Z"/></svg></div>
<div class="b" style="left:1497.6px;top:571.9499999999999px;width:26.3px;height:26.2px;background:#e3f6fd;border:1px solid #dbf2fb;border-radius:4px;box-sizing:border-box"></div>
<div class="ic" style="left:1504.50px;top:579.35px;width:12px;height:12px"><svg width="12" height="12" viewBox="0 0 16 16" fill="none" stroke="#1aa8c6" stroke-width="1.6" stroke-linecap="round" stroke-linejoin="round"><path d="M4.6 13.2L3.2 11.8a1.2 1.2 0 0 1 0 -1.7L10.2 3.1a1.2 1.2 0 0 1 1.7 0L13.3 4.5a1.2 1.2 0 0 1 0 1.7L6.3 13.2a1.2 1.2 0 0 1 -1.7 0Z"/><path d="M10.6 4.6L11.8 5.8"/></svg></div>
<div class="b" style="left:1527.5px;top:571.9499999999999px;width:26.3px;height:26.2px;background:#ffdfe5;border:1px solid #fdcad4;border-radius:4px;box-sizing:border-box"></div>
<div class="ic" style="left:1534.35px;top:578.65px;width:12.5px;height:12.5px"><svg width="12.5" height="12.5" viewBox="0 0 16 16" fill="none" stroke="#e5173f" stroke-width="1.75" stroke-linecap="round" stroke-linejoin="round"><path d="M2.6 4.6H13.4"/><path d="M3.6 4.6L4.4 13.2a1.4 1.4 0 0 0 1.4 1.2H10.2a1.4 1.4 0 0 0 1.4 -1.2L12.4 4.6"/><path d="M6.2 4.4V2.8a1 1 0 0 1 1 -1H8.8a1 1 0 0 1 1 1V4.4"/><path d="M6.9 7V11.8"/><path d="M9.1 7V11.8"/></svg></div>
<div class="b" style="left:250px;top:652.3px;width:1312.3px;height:1px;background:#eceef1"></div>
<div class="b" style="left:271px;top:618.3px;width:107.2px;height:23px;background:#00ae62;border-radius:3px"></div>
<div class="t" style="left:271.00px;width:107.2px;text-align:center;top:621px;font-size:10.8px;line-height:15px;color:#ffffff;font-weight:400;letter-spacing:-0.27px;-webkit-text-stroke:0.1px currentColor">#020250606122637</div>
<div class="t" style="left:501.3px;top:622px;font-size:12px;line-height:17px;color:#3a3e43;font-weight:400;letter-spacing:-0.2px">Jun 6, 2025</div>
<div class="t" style="left:636.9px;top:622px;font-size:12px;line-height:17px;color:#3a3e43;font-weight:400;">Guest</div>
<div class="t" style="left:845.5px;top:622px;font-size:12px;line-height:17px;color:#3a3e43;font-weight:400;letter-spacing:-0.2px">$55,0</div>
<div class="t" style="left:956.9px;top:622px;font-size:12px;line-height:17px;color:#3a3e43;font-weight:400;letter-spacing:-0.1px">Cash On Delivery</div>
<div class="b" style="left:1152.5px;top:617.1999999999999px;width:166.2px;height:25.4px;background:#e1f5fc;border-radius:4px"></div>
<div class="ic" style="left:1170.15px;top:623.80px;width:13.1px;height:13.1px"><svg width="13.1" height="13.1" viewBox="0 0 16 16" fill="none" stroke="#0f1215" stroke-width="1" stroke-linecap="round" stroke-linejoin="round"><path d="M1 8.4L2.9 6.5L6 9.5L13.1 2.4L15 4.3L6 13.3Z" fill="#0f1215" stroke="none"/></svg></div>
<div class="t" style="left:1186px;top:622px;font-size:11.7px;line-height:16px;color:#0f1215;font-weight:400;-webkit-text-stroke:0.2px currentColor">Pending : Jun 6, 2025</div>
<div class="b" style="left:1467.6px;top:617.0999999999999px;width:26.5px;height:26.2px;background:#fff4e5;border:1px solid #fde7c8;border-radius:4px;box-sizing:border-box"></div>
<div class="ic" style="left:1473.90px;top:623.60px;width:13.2px;height:13.2px"><svg width="13.2" height="13.2" viewBox="0 0 16 16" fill="none" stroke="#f8ad38" stroke-width="1.4" stroke-linecap="round" stroke-linejoin="round"><path d="M8 8m-1 0a1 1 0 1 0 2 0a1 1 0 1 0 -2 0"/><path d="M14 8C12.4 10.8 10.4 12 8 12C5.6 12 3.6 10.8 2 8C3.6 5.2 5.6 4 8 4C10.4 4 12.4 5.2 14 8Z"/></svg></div>
<div class="b" style="left:1497.6px;top:617.0999999999999px;width:26.3px;height:26.2px;background:#e3f6fd;border:1px solid #dbf2fb;border-radius:4px;box-sizing:border-box"></div>
<div class="ic" style="left:1504.50px;top:624.50px;width:12px;height:12px"><svg width="12" height="12" viewBox="0 0 16 16" fill="none" stroke="#1aa8c6" stroke-width="1.6" stroke-linecap="round" stroke-linejoin="round"><path d="M4.6 13.2L3.2 11.8a1.2 1.2 0 0 1 0 -1.7L10.2 3.1a1.2 1.2 0 0 1 1.7 0L13.3 4.5a1.2 1.2 0 0 1 0 1.7L6.3 13.2a1.2 1.2 0 0 1 -1.7 0Z"/><path d="M10.6 4.6L11.8 5.8"/></svg></div>
<div class="b" style="left:1527.5px;top:617.0999999999999px;width:26.3px;height:26.2px;background:#ffdfe5;border:1px solid #fdcad4;border-radius:4px;box-sizing:border-box"></div>
<div class="ic" style="left:1534.35px;top:623.80px;width:12.5px;height:12.5px"><svg width="12.5" height="12.5" viewBox="0 0 16 16" fill="none" stroke="#e5173f" stroke-width="1.75" stroke-linecap="round" stroke-linejoin="round"><path d="M2.6 4.6H13.4"/><path d="M3.6 4.6L4.4 13.2a1.4 1.4 0 0 0 1.4 1.2H10.2a1.4 1.4 0 0 0 1.4 -1.2L12.4 4.6"/><path d="M6.2 4.4V2.8a1 1 0 0 1 1 -1H8.8a1 1 0 0 1 1 1V4.4"/><path d="M6.9 7V11.8"/><path d="M9.1 7V11.8"/></svg></div>
<div class="b" style="left:250px;top:706.3px;width:1312.3px;height:1px;background:#eceef1"></div>
<div class="b" style="left:271px;top:668.3px;width:113.1px;height:23px;background:#00ae62;border-radius:3px"></div>
<div class="t" style="left:271.00px;width:113.1px;text-align:center;top:671px;font-size:10.8px;line-height:15px;color:#ffffff;font-weight:400;letter-spacing:-0.27px;-webkit-text-stroke:0.1px currentColor">#2520250606120046</div>
<div class="t" style="left:501.3px;top:672px;font-size:12px;line-height:17px;color:#3a3e43;font-weight:400;letter-spacing:-0.2px">Jun 6, 2025</div>
<div class="t" style="left:636.9px;top:664px;font-size:12px;line-height:17px;color:#3a3e43;font-weight:400;letter-spacing:-0.05px">Shubham Ghori</div>
<div class="t" style="left:636.9px;top:682px;font-size:12px;line-height:17px;color:#3a3e43;font-weight:400;letter-spacing:-0.1px">9875589998</div>
<div class="t" style="left:845.5px;top:672px;font-size:12px;line-height:17px;color:#3a3e43;font-weight:400;letter-spacing:-0.2px">$220,0</div>
<div class="t" style="left:956.9px;top:672px;font-size:12px;line-height:17px;color:#3a3e43;font-weight:400;letter-spacing:-0.1px">Cash On Delivery</div>
<div class="b" style="left:1152.5px;top:667.1999999999999px;width:166.2px;height:25.4px;background:#dcdde0;border-radius:4px"></div>
<div class="t" style="left:1152.60px;width:166px;text-align:center;top:672px;font-size:11.7px;line-height:16px;color:#383d43;font-weight:400;-webkit-text-stroke:0.2px currentColor">Shipped : Jun 6, 2025</div>
<div class="b" style="left:1467.6px;top:667.0999999999999px;width:26.5px;height:26.2px;background:#fff4e5;border:1px solid #fde7c8;border-radius:4px;box-sizing:border-box"></div>
<div class="ic" style="left:1473.90px;top:673.60px;width:13.2px;height:13.2px"><svg width="13.2" height="13.2" viewBox="0 0 16 16" fill="none" stroke="#f8ad38" stroke-width="1.4" stroke-linecap="round" stroke-linejoin="round"><path d="M8 8m-1 0a1 1 0 1 0 2 0a1 1 0 1 0 -2 0"/><path d="M14 8C12.4 10.8 10.4 12 8 12C5.6 12 3.6 10.8 2 8C3.6 5.2 5.6 4 8 4C10.4 4 12.4 5.2 14 8Z"/></svg></div>
<div class="b" style="left:1497.6px;top:667.0999999999999px;width:26.3px;height:26.2px;background:#e3f6fd;border:1px solid #dbf2fb;border-radius:4px;box-sizing:border-box"></div>
<div class="ic" style="left:1504.50px;top:674.50px;width:12px;height:12px"><svg width="12" height="12" viewBox="0 0 16 16" fill="none" stroke="#1aa8c6" stroke-width="1.6" stroke-linecap="round" stroke-linejoin="round"><path d="M4.6 13.2L3.2 11.8a1.2 1.2 0 0 1 0 -1.7L10.2 3.1a1.2 1.2 0 0 1 1.7 0L13.3 4.5a1.2 1.2 0 0 1 0 1.7L6.3 13.2a1.2 1.2 0 0 1 -1.7 0Z"/><path d="M10.6 4.6L11.8 5.8"/></svg></div>
<div class="b" style="left:1527.5px;top:667.0999999999999px;width:26.3px;height:26.2px;background:#ffdfe5;border:1px solid #fdcad4;border-radius:4px;box-sizing:border-box"></div>
<div class="ic" style="left:1534.35px;top:673.80px;width:12.5px;height:12.5px"><svg width="12.5" height="12.5" viewBox="0 0 16 16" fill="none" stroke="#e5173f" stroke-width="1.75" stroke-linecap="round" stroke-linejoin="round"><path d="M2.6 4.6H13.4"/><path d="M3.6 4.6L4.4 13.2a1.4 1.4 0 0 0 1.4 1.2H10.2a1.4 1.4 0 0 0 1.4 -1.2L12.4 4.6"/><path d="M6.2 4.4V2.8a1 1 0 0 1 1 -1H8.8a1 1 0 0 1 1 1V4.4"/><path d="M6.9 7V11.8"/><path d="M9.1 7V11.8"/></svg></div>
<div class="b" style="left:250px;top:760.6px;width:1312.3px;height:1px;background:#eceef1"></div>
<div class="b" style="left:271px;top:722.45px;width:113.1px;height:23px;background:#00ae62;border-radius:3px"></div>
<div class="t" style="left:271.00px;width:113.1px;text-align:center;top:726px;font-size:10.8px;line-height:15px;color:#ffffff;font-weight:400;letter-spacing:-0.27px;-webkit-text-stroke:0.1px currentColor">#2520250606115839</div>
<div class="t" style="left:501.3px;top:727px;font-size:12px;line-height:17px;color:#3a3e43;font-weight:400;letter-spacing:-0.2px">Jun 6, 2025</div>
<div class="t" style="left:636.9px;top:718px;font-size:12px;line-height:17px;color:#3a3e43;font-weight:400;letter-spacing:-0.05px">Shubham Ghori</div>
<div class="t" style="left:636.9px;top:736px;font-size:12px;line-height:17px;color:#3a3e43;font-weight:400;letter-spacing:-0.1px">9875589998</div>
<div class="t" style="left:845.5px;top:727px;font-size:12px;line-height:17px;color:#3a3e43;font-weight:400;letter-spacing:-0.2px">$1,180,0</div>
<div class="t" style="left:956.9px;top:727px;font-size:12px;line-height:17px;color:#3a3e43;font-weight:400;letter-spacing:-0.1px">Cash On Delivery</div>
<div class="b" style="left:1152.5px;top:721.35px;width:166.2px;height:25.4px;background:#ffdde3;border-radius:4px"></div>
<div class="t" style="left:1152.60px;width:166px;text-align:center;top:727px;font-size:11.7px;line-height:16px;color:#e3173f;font-weight:400;-webkit-text-stroke:0.2px currentColor">Cancel : Jun 6, 2025</div>
<div class="b" style="left:1467.6px;top:721.25px;width:26.5px;height:26.2px;background:#fff4e5;border:1px solid #fde7c8;border-radius:4px;box-sizing:border-box"></div>
<div class="ic" style="left:1473.90px;top:727.75px;width:13.2px;height:13.2px"><svg width="13.2" height="13.2" viewBox="0 0 16 16" fill="none" stroke="#f8ad38" stroke-width="1.4" stroke-linecap="round" stroke-linejoin="round"><path d="M8 8m-1 0a1 1 0 1 0 2 0a1 1 0 1 0 -2 0"/><path d="M14 8C12.4 10.8 10.4 12 8 12C5.6 12 3.6 10.8 2 8C3.6 5.2 5.6 4 8 4C10.4 4 12.4 5.2 14 8Z"/></svg></div>
<div class="b" style="left:1497.6px;top:721.25px;width:26.3px;height:26.2px;background:#e3f6fd;border:1px solid #dbf2fb;border-radius:4px;box-sizing:border-box"></div>
<div class="ic" style="left:1504.50px;top:728.65px;width:12px;height:12px"><svg width="12" height="12" viewBox="0 0 16 16" fill="none" stroke="#1aa8c6" stroke-width="1.6" stroke-linecap="round" stroke-linejoin="round"><path d="M4.6 13.2L3.2 11.8a1.2 1.2 0 0 1 0 -1.7L10.2 3.1a1.2 1.2 0 0 1 1.7 0L13.3 4.5a1.2 1.2 0 0 1 0 1.7L6.3 13.2a1.2 1.2 0 0 1 -1.7 0Z"/><path d="M10.6 4.6L11.8 5.8"/></svg></div>
<div class="b" style="left:1527.5px;top:721.25px;width:26.3px;height:26.2px;background:#ffdfe5;border:1px solid #fdcad4;border-radius:4px;box-sizing:border-box"></div>
<div class="ic" style="left:1534.35px;top:727.95px;width:12.5px;height:12.5px"><svg width="12.5" height="12.5" viewBox="0 0 16 16" fill="none" stroke="#e5173f" stroke-width="1.75" stroke-linecap="round" stroke-linejoin="round"><path d="M2.6 4.6H13.4"/><path d="M3.6 4.6L4.4 13.2a1.4 1.4 0 0 0 1.4 1.2H10.2a1.4 1.4 0 0 0 1.4 -1.2L12.4 4.6"/><path d="M6.2 4.4V2.8a1 1 0 0 1 1 -1H8.8a1 1 0 0 1 1 1V4.4"/><path d="M6.9 7V11.8"/><path d="M9.1 7V11.8"/></svg></div>
<div class="b" style="left:250px;top:806.3px;width:1312.3px;height:1px;background:#eceef1"></div>
<div class="b" style="left:271px;top:772.45px;width:107.2px;height:23px;background:#00ae62;border-radius:3px"></div>
<div class="t" style="left:271.00px;width:107.2px;text-align:center;top:776px;font-size:10.8px;line-height:15px;color:#ffffff;font-weight:400;letter-spacing:-0.27px;-webkit-text-stroke:0.1px currentColor">#020250606115641</div>
<div class="t" style="left:501.3px;top:777px;font-size:12px;line-height:17px;color:#3a3e43;font-weight:400;letter-spacing:-0.2px">Jun 6, 2025</div>
<div class="t" style="left:636.9px;top:777px;font-size:12px;line-height:17px;color:#3a3e43;font-weight:400;">Guest</div>
<div class="t" style="left:845.5px;top:777px;font-size:12px;line-height:17px;color:#3a3e43;font-weight:400;letter-spacing:-0.2px">$140,0</div>
<div class="t" style="left:956.9px;top:777px;font-size:12px;line-height:17px;color:#3a3e43;font-weight:400;letter-spacing:-0.1px">Cash On Delivery</div>
<div class="b" style="left:1152.5px;top:771.35px;width:166.2px;height:25.4px;background:#00ae62;border-radius:4px"></div>
<div class="t" style="left:1152.60px;width:166px;text-align:center;top:777px;font-size:11.7px;line-height:16px;color:#ffffff;font-weight:400;-webkit-text-stroke:0.2px currentColor">Delivered : Jun 6, 2025</div>
<div class="b" style="left:1467.6px;top:771.25px;width:26.5px;height:26.2px;background:#fff4e5;border:1px solid #fde7c8;border-radius:4px;box-sizing:border-box"></div>
<div class="ic" style="left:1473.90px;top:777.75px;width:13.2px;height:13.2px"><svg width="13.2" height="13.2" viewBox="0 0 16 16" fill="none" stroke="#f8ad38" stroke-width="1.4" stroke-linecap="round" stroke-linejoin="round"><path d="M8 8m-1 0a1 1 0 1 0 2 0a1 1 0 1 0 -2 0"/><path d="M14 8C12.4 10.8 10.4 12 8 12C5.6 12 3.6 10.8 2 8C3.6 5.2 5.6 4 8 4C10.4 4 12.4 5.2 14 8Z"/></svg></div>
<div class="b" style="left:1497.6px;top:771.25px;width:26.3px;height:26.2px;background:#e3f6fd;border:1px solid #dbf2fb;border-radius:4px;box-sizing:border-box"></div>
<div class="ic" style="left:1504.50px;top:778.65px;width:12px;height:12px"><svg width="12" height="12" viewBox="0 0 16 16" fill="none" stroke="#1aa8c6" stroke-width="1.6" stroke-linecap="round" stroke-linejoin="round"><path d="M4.6 13.2L3.2 11.8a1.2 1.2 0 0 1 0 -1.7L10.2 3.1a1.2 1.2 0 0 1 1.7 0L13.3 4.5a1.2 1.2 0 0 1 0 1.7L6.3 13.2a1.2 1.2 0 0 1 -1.7 0Z"/><path d="M10.6 4.6L11.8 5.8"/></svg></div>
<div class="b" style="left:1527.5px;top:771.25px;width:26.3px;height:26.2px;background:#ffdfe5;border:1px solid #fdcad4;border-radius:4px;box-sizing:border-box"></div>
<div class="ic" style="left:1534.35px;top:777.95px;width:12.5px;height:12.5px"><svg width="12.5" height="12.5" viewBox="0 0 16 16" fill="none" stroke="#e5173f" stroke-width="1.75" stroke-linecap="round" stroke-linejoin="round"><path d="M2.6 4.6H13.4"/><path d="M3.6 4.6L4.4 13.2a1.4 1.4 0 0 0 1.4 1.2H10.2a1.4 1.4 0 0 0 1.4 -1.2L12.4 4.6"/><path d="M6.2 4.4V2.8a1 1 0 0 1 1 -1H8.8a1 1 0 0 1 1 1V4.4"/><path d="M6.9 7V11.8"/><path d="M9.1 7V11.8"/></svg></div>
<div class="t" style="left:250px;top:845px;font-size:12.1px;line-height:17px;color:#3a3e43;font-weight:400;letter-spacing:-0.05px">Showing 1 to 10 of 15 entries</div>
<div class="b" style="left:1433.3px;top:835.2px;width:29.2px;height:28.7px;border:1px solid #e1e4e8;border-radius:5px;box-sizing:border-box;background:#fff"></div>
<div class="ic" style="left:1441.85px;top:843.55px;width:12px;height:12px"><svg width="12" height="12" viewBox="0 0 24 24" fill="none" stroke="#6c737a" stroke-width="2.5" stroke-linecap="round" stroke-linejoin="round"><path d="M15 6l-6 6l6 6"/></svg></div>
<div class="b" style="left:1466.7px;top:835.2px;width:29.2px;height:28.7px;background:#00ae62;border-radius:5px"></div>
<div class="t" style="left:1466.70px;width:29px;text-align:center;top:842px;font-size:11.2px;line-height:16px;color:#fff;font-weight:400;">1</div>
<div class="b" style="left:1500.4px;top:835.2px;width:28.6px;height:28.7px;border:1px solid #e1e4e8;border-radius:5px;box-sizing:border-box;background:#fff"></div>
<div class="t" style="left:1500.10px;width:29px;text-align:center;top:842px;font-size:11.2px;line-height:16px;color:#15181b;font-weight:400;">2</div>
<div class="b" style="left:1533.4px;top:835.2px;width:29.2px;height:28.7px;border:1px solid #e1e4e8;border-radius:5px;box-sizing:border-box;background:#fff"></div>
<div class="ic" style="left:1541.95px;top:843.55px;width:12px;height:12px"><svg width="12" height="12" viewBox="0 0 24 24" fill="none" stroke="#15181b" stroke-width="2.8" stroke-linecap="round" stroke-linejoin="round"><path d="M9 6l6 6l-6 6"/></svg></div>
</body></html>
